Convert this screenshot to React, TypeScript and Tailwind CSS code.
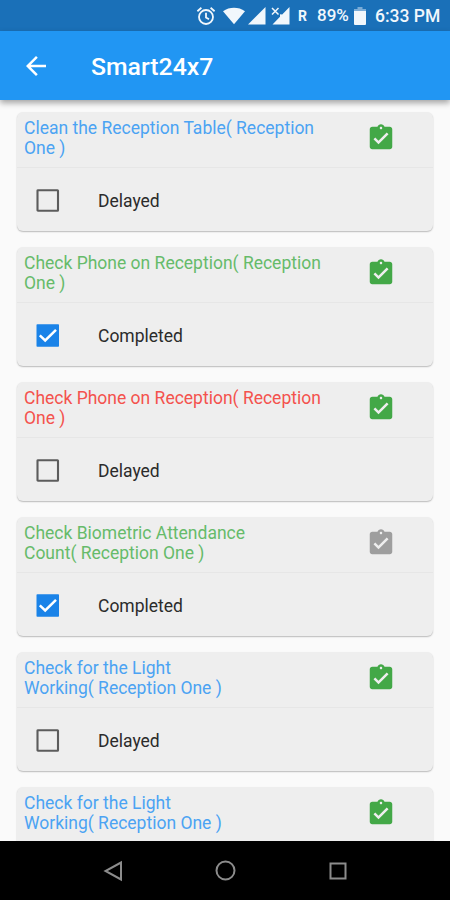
import { MdArrowBack, MdAssignmentTurnedIn } from 'react-icons/md';

type Tone = 'blue' | 'green' | 'red';

interface Task {
  id: number;
  lines: [string, string];
  tone: Tone;
  status?: 'Completed' | 'Delayed';
  assigned: boolean;
}

const TONE: Record<Tone, string> = {
  blue: 'text-[#4ba3f3]',
  green: 'text-[#66bb6a]',
  red: 'text-[#f4524d]',
};

const TASKS: Task[] = [
  { id: 1, lines: ['Clean the Reception Table( Reception', 'One )'], tone: 'blue', status: 'Delayed', assigned: true },
  { id: 2, lines: ['Check Phone on Reception( Reception', 'One )'], tone: 'green', status: 'Completed', assigned: true },
  { id: 3, lines: ['Check Phone on Reception( Reception', 'One )'], tone: 'red', status: 'Delayed', assigned: true },
  { id: 4, lines: ['Check Biometric Attendance', 'Count( Reception One )'], tone: 'green', status: 'Completed', assigned: false },
  { id: 5, lines: ['Check for the Light', 'Working( Reception One )'], tone: 'blue', status: 'Delayed', assigned: true },
  { id: 6, lines: ['Check for the Light', 'Working( Reception One )'], tone: 'blue', assigned: true },
];

function StatusBar() {
  return (
    <div className="flex h-[31px] shrink-0 items-center bg-[#1a70b8] pl-[196px] pt-px text-[#f1f7fc]">
      <svg width="20" height="20" viewBox="0 0 20 20" fill="none" stroke="currentColor" strokeWidth="1.8">
        <circle cx="10" cy="11" r="7" />
        <path d="M10 6.8v4.6l3 1.8M1.4 5.2l4-3.4M18.6 5.2l-4-3.4" />
      </svg>
      <svg className="ml-[6px]" width="24" height="18" viewBox="0 0 24 18" fill="currentColor">
        <path d="M1 4.2C7.5 -.4 16.5 -.4 23 4.2L12 17.2z" />
      </svg>
      <svg className="ml-[2px]" width="18" height="18" viewBox="0 0 18 18" fill="currentColor">
        <path d="M0 17.5 17.5 0v17.5z" />
      </svg>
      <svg className="ml-[5px]" width="19" height="18" viewBox="0 0 19 18" fill="currentColor">
        <path d="M1.5 17.5 9 9.7V7.2l2.2.2L18.5 0v17.5z" />
        <path d="m1 1 6.5 6.5M7.5 1 1 7.5" stroke="currentColor" strokeWidth="1.5" />
      </svg>
      <span className="ml-[8px] w-[12px] text-[14px] font-bold">R</span>
      <span className="ml-[7px] w-[32px] text-[17px] font-medium">89%</span>
      <svg className="ml-[5px]" width="12" height="18" viewBox="0 0 12 18" fill="currentColor">
        <path d="M0 2h12v2H0zM3.5 0h5v2h-5z" opacity=".45" />
        <path d="M0 4h12v13a1 1 0 0 1-1 1H1a1 1 0 0 1-1-1z" />
      </svg>
      <span className="ml-[9px] whitespace-nowrap text-[17.5px] font-medium">6:33 PM</span>
    </div>
  );
}

function Checkbox({ checked }: { checked: boolean }) {
  return (
    <svg className="shrink-0" width="24" height="24" viewBox="0 0 24 24" fill="none">
      {checked ? (
        <>
          <rect x=".5" y=".2" width="22.5" height="22.5" rx=".8" fill="#1a83e8" />
          <path d="m3.8 11.3 5.4 5.2L20 5.9" stroke="#fff" strokeWidth="2.5" />
        </>
      ) : (
        <rect x="1.5" y="1.2" width="20.5" height="20.5" rx=".5" stroke="#5c5c5c" strokeWidth="2.1" />
      )}
    </svg>
  );
}

function TaskCard({ task }: { task: Task }) {
  return (
    <div className="h-[119.5px] shrink-0 rounded-[6px] bg-[#eeeeee] shadow-[0_1px_1.5px_rgba(0,0,0,0.26)]">
      <div className="flex h-[56px] border-b border-[#e6e6e6] pl-[7px] pt-[6.5px]">
        <p className={`w-[342px] whitespace-nowrap text-[17.5px] leading-[20px] ${TONE[task.tone]}`}>
          {task.lines[0]}
          <br />
          {task.lines[1]}
        </p>
        <MdAssignmentTurnedIn
          size={30}
          className={`mt-[5px] shrink-0 ${task.assigned ? 'text-[#43a847]' : 'text-[#9e9e9e]'}`}
        />
      </div>
      {task.status && (
        <div className="flex h-[62.5px] items-center pb-1 pl-[19px] pt-[8px]">
          <Checkbox checked={task.status === 'Completed'} />
          <span className="ml-[38px] pt-px text-[17.5px] text-[#2b2b2b]">{task.status}</span>
        </div>
      )}
    </div>
  );
}

function NavBar() {
  return (
    <div className="flex h-[59px] shrink-0 items-center justify-between bg-black px-[103px] text-[#8c8c8c]">
      <svg width="20" height="22" viewBox="0 0 20 22" fill="none" stroke="currentColor" strokeWidth="2">
        <path d="M18 2.5v17L2.5 11z" />
      </svg>
      <svg width="22" height="22" viewBox="0 0 22 22" fill="none" stroke="currentColor" strokeWidth="2">
        <circle cx="10.5" cy="10.5" r="9" />
      </svg>
      <svg width="18" height="18" viewBox="0 0 18 18" fill="none" stroke="currentColor" strokeWidth="2">
        <rect x="1.5" y="1.5" width="15" height="15" />
      </svg>
    </div>
  );
}

export default function App() {
  return (
    <div className="flex h-[900px] w-[450px] flex-col overflow-hidden bg-[#fafafa] font-[Roboto,sans-serif]">
      <StatusBar />
      <header className="z-10 flex h-[69px] shrink-0 items-center bg-[#2196f3] pl-[21px] pt-[2px] text-white shadow-[0_3px_6px_rgba(0,0,0,0.35)]">
        <MdArrowBack size={30} className="-mt-[2px]" />
        <h1 className="ml-[40px] pt-px text-[24.8px] font-medium">Smart24x7</h1>
      </header>
      <main className="flex min-h-0 flex-1 flex-col gap-[15.5px] overflow-hidden px-[17px] pt-[11.5px]">
        {TASKS.map((task) => (
          <TaskCard key={task.id} task={task} />
        ))}
      </main>
      <NavBar />
    </div>
  );
}
